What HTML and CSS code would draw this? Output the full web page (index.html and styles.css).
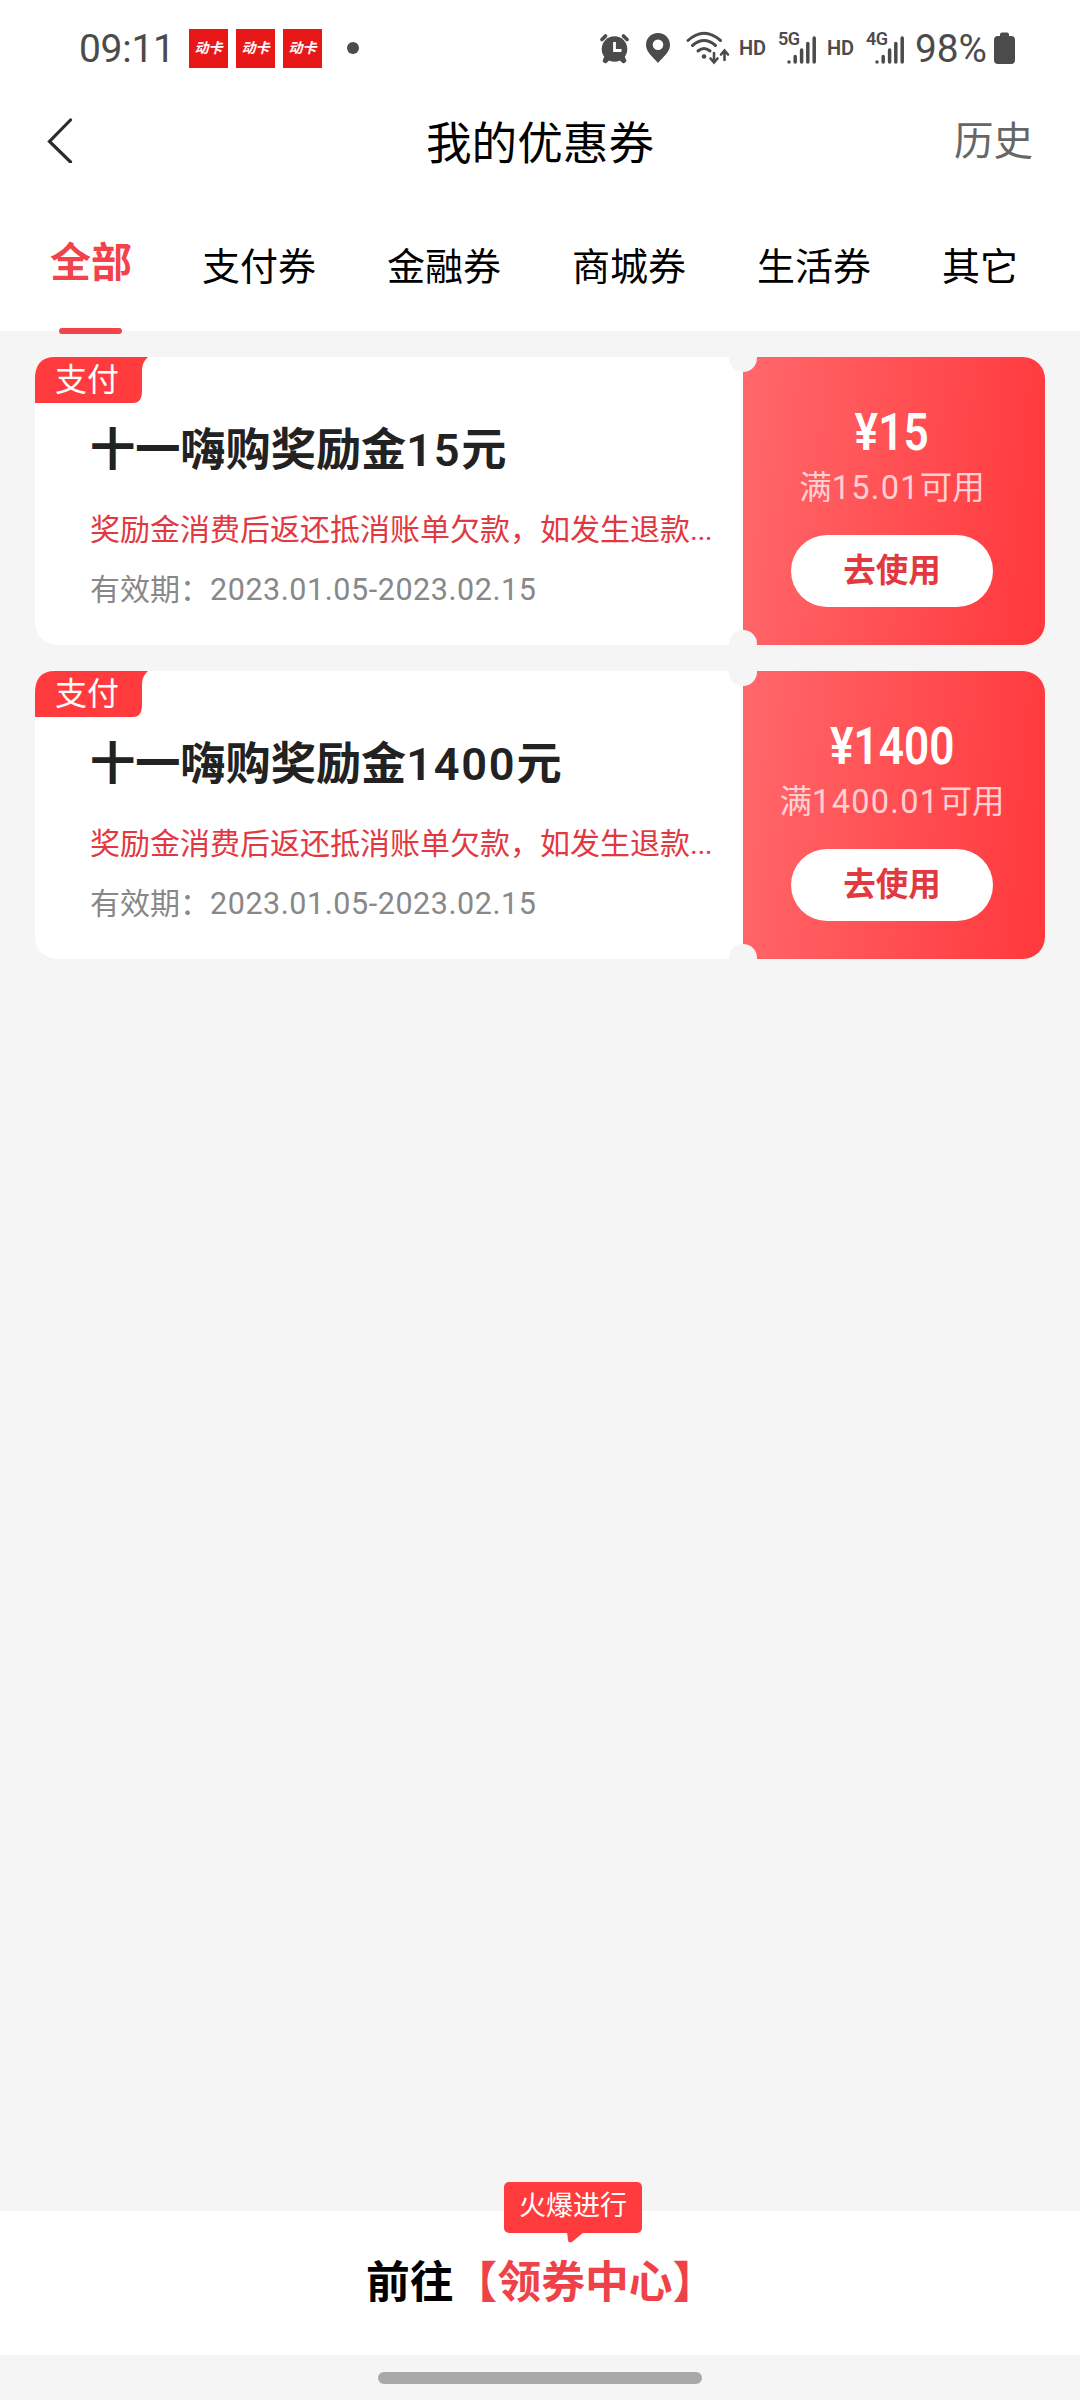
FILE: index.html
```html
<!DOCTYPE html>
<html lang="zh-CN">
<head>
<meta charset="utf-8">
<title>我的优惠券</title>
<link rel="stylesheet" href="styles.css">
</head>
<body>
<div class="screen">
  <div class="status">
    <span class="clock">09:11</span>
    <div class="notices">
      <span class="app">动卡</span>
      <span class="app">动卡</span>
      <span class="app">动卡</span>
    </div>
    <span class="dot"></span>
    <svg class="sys" width="420" height="56" viewBox="0 -8 420 56">
      <g fill="#4b4b4b">
        <circle cx="14.500" cy="21" r="12.8"/>
        <path d="M4.500 28l5 4-3 3q-2 1-4-2zM24.500 28l-5 4 3 3q2 1 4-2z"/>
      </g>
      <g fill="none" stroke="#4b4b4b" stroke-width="3.600" stroke-linecap="round">
        <path d="M2 11.500L5.500 8M23.500 8L27 11.500"/>
      </g>
      <path d="M14.500 14v8.500h7" fill="none" stroke="#fff" stroke-width="2.800"/>
      <path fill="#4b4b4b" fill-rule="evenodd" d="M58 5c7 0 12 5.200 12 12 0 7-7 12-12 18-5-6-12-11-12-18C46 10.200 51 5 58 5zM58 11.500a5.300 5.300 0 1 0 0 10.600 5.300 5.300 0 0 0 0-10.600z"/>
      <g fill="none" stroke="#4b4b4b" stroke-width="3" stroke-linecap="round">
        <path d="M88 12.500Q104 -2 120.500 12.500M92.500 17.500Q104 7.500 115.500 17.500M98 23Q104 18 110 23"/>
        <path stroke-width="2.600" d="M114 25v9M110.500 30.500l3.500 4 3.500-4M124.500 32V23M121 26.500l3.500-4 3.500 4"/>
      </g>
      <circle cx="104" cy="28.500" r="2.300" fill="#4b4b4b"/>
      <g class="hd">
        <text x="139" y="26.500" textLength="27">HD</text>
        <text x="227" y="26.500" textLength="27">HD</text>
      </g>
      <g class="net">
        <text x="178" y="17" textLength="22">5G</text>
        <text x="266" y="17" textLength="22">4G</text>
      </g>
      <g stroke="#4b4b4b" stroke-width="3.500" stroke-linecap="round">
        <path d="M189 34v.1M195.200 28.500v5.500M201.600 22v12M207.800 15.500v18.500M214.200 10v24"/>
        <path d="M277 34v.1M283.200 28.500v5.500M289.600 22v12M295.800 15.500v18.500M302.200 10v24"/>
      </g>
      <text class="pct" x="315" y="34" textLength="72" lengthAdjust="spacingAndGlyphs">98%</text>
      <path fill="#4b4b4b" d="M400 6.500q0-2 2-2h5q2 0 2 2v1.500h2q4 0 4 4v20q0 4-4 4h-13q-4 0-4-4V12q0-4 4-4h2z"/>
    </svg>
  </div>

  <header class="header">
    <svg class="back" width="26" height="46" viewBox="0 0 26 46"><path d="M23.500 3L2.500 24.500L23.500 45" fill="none" stroke="#2b2b2b" stroke-width="3.200" stroke-linecap="round"/></svg>
    <h1 class="heading">我的优惠券</h1>
    <span class="history">历史</span>
  </header>

  <nav class="tabs">
    <span class="tab tab-active">全部</span>
    <span class="tab">支付券</span>
    <span class="tab">金融券</span>
    <span class="tab">商城券</span>
    <span class="tab">生活券</span>
    <span class="tab">其它</span>
  </nav>

  <main class="list">
    <article class="card">
      <span class="tag">支付</span>
      <div class="info">
        <h2 class="name">十一嗨购奖励金<span class="num">15</span>元</h2>
        <p class="desc">奖励金消费后返还抵消账单欠款，如发生退款<span class="more">...</span></p>
        <p class="date">有效期：<span class="num">2023.01.05-2023.02.15</span></p>
      </div>
      <div class="value">
        <span class="amount">¥15</span>
        <span class="limit">满<span class="num">15.01</span>可用</span>
        <span class="use">去使用</span>
      </div>
    </article>
    <article class="card">
      <span class="tag">支付</span>
      <div class="info">
        <h2 class="name">十一嗨购奖励金<span class="num">1400</span>元</h2>
        <p class="desc">奖励金消费后返还抵消账单欠款，如发生退款<span class="more">...</span></p>
        <p class="date">有效期：<span class="num">2023.01.05-2023.02.15</span></p>
      </div>
      <div class="value">
        <span class="amount">¥1400</span>
        <span class="limit">满<span class="num">1400.01</span>可用</span>
        <span class="use">去使用</span>
      </div>
    </article>
  </main>

  <footer class="footer">
    <div class="bubble">火爆进行</div>
    <p class="goto">前往<span class="center">【领券中心】</span></p>
  </footer>
  <div class="gesture"><span class="pill"></span></div>
</div>
</body>
</html>
```
FILE: styles.css
```css
* { box-sizing: border-box; }
body {
  margin: 0;
  font-family: "Noto Sans CJK SC", sans-serif;
  text-spacing-trim: space-all;
}
h1, h2, p { margin: 0; }
.screen {
  width: 1080px;
  height: 2400px;
  display: flex;
  flex-direction: column;
  background: #f5f5f5;
  overflow: hidden;
  white-space: nowrap;
}
.num, .more { font-family: Roboto, sans-serif; line-height: 1; }

/* Status bar */
.status {
  height: 96px;
  padding-left: 79px;
  display: flex;
  align-items: center;
  background: #fff;
  color: #4b4b4b;
}
.clock {
  width: 110px;
  padding-top: 1px;
  font: 39px/48px Roboto, sans-serif;
  letter-spacing: -0.300px;
}
.notices { display: flex; gap: 8px; padding-top: 1px; }
.app {
  width: 39px;
  height: 39px;
  background: #e91818;
  color: #fff;
  font-size: 14px;
  font-weight: 700;
  font-style: italic;
  line-height: 37px;
  text-align: center;
}
.dot {
  width: 12px;
  height: 12px;
  margin-left: 25px;
  border-radius: 50%;
  background: #4b4b4b;
}
.sys { margin-left: 241px; }
.sys text { font-family: Roboto, sans-serif; fill: #4b4b4b; }
.hd text { font-size: 20px; font-weight: 600; }
.net text { font-size: 18px; font-weight: 600; }
.sys .pct { font-size: 39px; }

/* Title bar */
.header {
  height: 88px;
  padding: 0 47px;
  display: grid;
  grid-template-columns: 1fr auto 1fr;
  align-items: center;
  background: #fff;
}
.back { display: block; }
.heading { font-size: 45.600px; font-weight: 400; line-height: 60px; }
.history {
  justify-self: end;
  padding-bottom: 4px;
  color: #666;
  font-size: 39.500px;
  line-height: 56px;
}

/* Category tabs */
.tabs {
  height: 147px;
  padding: 54px 50px 0;
  display: flex;
  align-items: flex-start;
  gap: 71px;
  background: #fff;
}
.tab { font-size: 38px; line-height: 51px; }
.tab-active {
  position: relative;
  height: 93px;
  margin-right: -1px;
  color: #f2434a;
  font-size: 41px;
  font-weight: 700;
  line-height: 43px;
}
.tab-active::after {
  content: "";
  position: absolute;
  left: 9px;
  bottom: -3px;
  width: 63px;
  height: 6px;
  border-radius: 3px;
  background: #f2434a;
}

/* Coupons */
.list {
  flex: 1;
  padding: 26px 35px;
  display: flex;
  flex-direction: column;
  gap: 26px;
}
.card {
  position: relative;
  height: 288px;
  display: flex;
  border-radius: 22px;
  background: #fff;
}
.card::before, .card::after {
  content: "";
  position: absolute;
  left: 694px;
  width: 28px;
  height: 28px;
  border-radius: 50%;
  background: #f5f5f5;
}
.card::before { top: -13px; }
.card::after { bottom: -13px; }
.tag {
  position: absolute;
  z-index: 0;
  left: 0;
  top: 0;
  width: 113px;
  height: 46px;
  padding-left: 20px;
  color: #fff;
  font-size: 32px;
  line-height: 41px;
}
.tag::before {
  content: "";
  position: absolute;
  z-index: -1;
  inset: 0;
  background: #ff3b3e;
  clip-path: path("M0 22C0 8 6 0 20 0H113C108 5 107 8 107 16V34C107 42 104 46 98 46H0Z");
}
.info { width: 708px; padding: 60px 0 0 55px; }
.name {
  color: #222;
  font-size: 45.200px;
  font-weight: 700;
  line-height: 60px;
}
.name .num { letter-spacing: 1.700px; font-weight: 600; }
.desc {
  margin-top: 30px;
  color: #e2383f;
  font-size: 30px;
  line-height: 40px;
}
.more { letter-spacing: -0.500px; }
.date {
  margin-top: 20px;
  color: #888;
  font-size: 30px;
  line-height: 40px;
}
.date .num { font-size: 30.500px; letter-spacing: 0.550px; }
.value {
  flex: 1;
  padding: 46px 4px 0 0;
  display: flex;
  flex-direction: column;
  align-items: center;
  border-radius: 0 22px 22px 0;
  background: linear-gradient(95deg, #ff686b, #ff383c);
  color: #fff;
}
.amount {
  font: 600 52px/60px Roboto, sans-serif;
  transform: scaleX(0.850);
}
.limit {
  margin-top: 2px;
  color: #ffd0d1;
  font-size: 32.500px;
  line-height: 40px;
}
.limit .num { letter-spacing: 1.300px; }
.use {
  width: 202px;
  height: 72px;
  margin-top: 30px;
  border-radius: 36px;
  background: #fff;
  color: #e2383f;
  font-size: 32.500px;
  font-weight: 700;
  line-height: 65px;
  text-align: center;
}

/* Coupon centre link */
.footer {
  position: relative;
  height: 144px;
  padding: 38px 0 0 366px;
  background: #fff;
}
.goto { font-size: 43.800px; font-weight: 700; line-height: 60px; color: #000; }
.center { color: #ee4248; }
.bubble {
  position: absolute;
  left: 504px;
  top: -29px;
  width: 138px;
  height: 51px;
  border-radius: 5px;
  background: #ff3b3e;
  color: #fff;
  font-size: 27px;
  line-height: 43px;
  text-align: center;
}
.bubble::after {
  content: "";
  position: absolute;
  left: 63px;
  top: 50px;
  width: 17px;
  height: 11px;
  background: #ff3b3e;
  clip-path: path("M0 0H17L5 10Q1 11.500 1 8Z");
}
.gesture {
  height: 45px;
  padding-top: 17px;
  display: flex;
  justify-content: center;
  background: #f5f5f5;
}
.pill { width: 324px; height: 12px; border-radius: 6px; background: #a9a9a9; }
```
